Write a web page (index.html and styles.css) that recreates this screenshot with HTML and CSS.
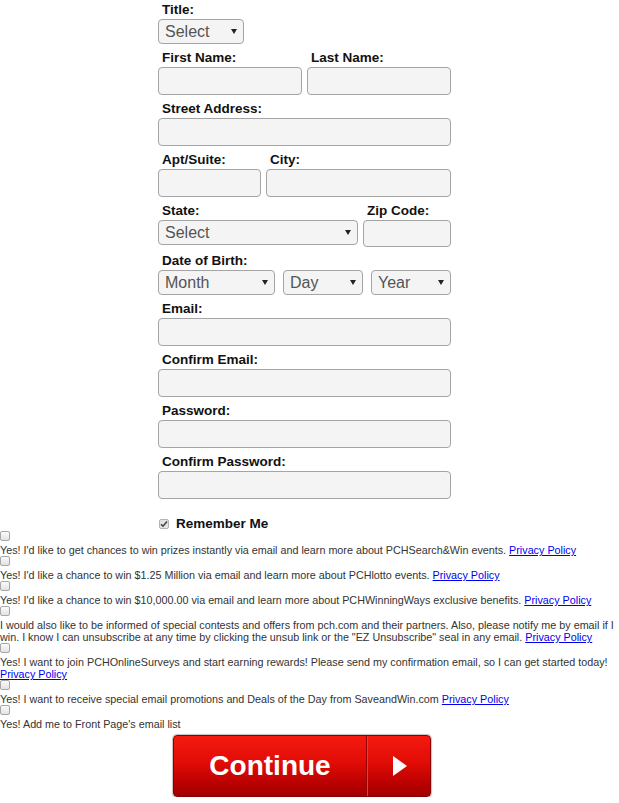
FILE: index.html
```html
<!DOCTYPE html>
<html lang="en">
<head>
<meta charset="utf-8">
<title>Registration</title>
<link rel="stylesheet" href="styles.css">
</head>
<body>
<form class="reg">
  <div class="group">
    <label class="lbl">Title:</label>
    <div class="sel w-title"><select><option>Select</option></select></div>
  </div>
  <div class="row">
    <div class="group w-half"><label class="lbl">First Name:</label><input class="txt" type="text"></div>
    <div class="group w-half"><label class="lbl">Last Name:</label><input class="txt" type="text"></div>
  </div>
  <div class="group"><label class="lbl">Street Address:</label><input class="txt" type="text"></div>
  <div class="row">
    <div class="group w-apt"><label class="lbl">Apt/Suite:</label><input class="txt" type="text"></div>
    <div class="group grow"><label class="lbl">City:</label><input class="txt" type="text"></div>
  </div>
  <div class="row">
    <div class="group w-state"><label class="lbl">State:</label><div class="sel"><select><option>Select</option></select></div></div>
    <div class="group grow"><label class="lbl">Zip Code:</label><input class="txt zip" type="text"></div>
  </div>
  <div class="group">
    <label class="lbl">Date of Birth:</label>
    <div class="row dob">
      <div class="sel w-month"><select><option>Month</option></select></div>
      <div class="sel w-day"><select><option>Day</option></select></div>
      <div class="sel grow"><select><option>Year</option></select></div>
    </div>
  </div>
  <div class="group"><label class="lbl">Email:</label><input class="txt" type="text"></div>
  <div class="group"><label class="lbl">Confirm Email:</label><input class="txt" type="text"></div>
  <div class="group"><label class="lbl">Password:</label><input class="txt" type="password"></div>
  <div class="group"><label class="lbl">Confirm Password:</label><input class="txt" type="password"></div>
  <label class="remember"><input type="checkbox" class="chk-on" checked><span>Remember Me</span></label>
</form>

<div class="opts">
  <label class="opt"><input type="checkbox">Yes! I'd like to get chances to win prizes instantly via email and learn more about PCHSearch&amp;Win events. <a href="#">Privacy Policy</a></label>
  <label class="opt"><input type="checkbox">Yes! I'd like a chance to win $1.25 Million via email and learn more about PCHlotto events. <a href="#">Privacy Policy</a></label>
  <label class="opt"><input type="checkbox">Yes! I'd like a chance to win $10,000.00 via email and learn more about PCHWinningWays exclusive benefits. <a href="#">Privacy Policy</a></label>
  <label class="opt"><input type="checkbox">I would also like to be informed of special contests and offers from pch.com and their partners. Also, please notify me by email if I win. I know I can unsubscribe at any time by clicking the unsub link or the "EZ Unsubscribe" seal in any email. <a href="#">Privacy Policy</a></label>
  <label class="opt"><input type="checkbox">Yes! I want to join PCHOnlineSurveys and start earning rewards! Please send my confirmation email, so I can get started today! <a href="#">Privacy Policy</a></label>
  <label class="opt"><input type="checkbox">Yes! I want to receive special email promotions and Deals of the Day from SaveandWin.com <a href="#">Privacy Policy</a></label>
  <label class="opt"><input type="checkbox">Yes! Add me to Front Page's email list</label>
</div>

<div class="actions">
  <button type="button" class="continue">
    <span class="c-text">Continue</span>
    <span class="c-arrow"><span class="tri"></span></span>
  </button>
</div>
</body>
</html>
```
FILE: styles.css
```css
* { box-sizing: border-box; }

body {
  margin: 0;
  background: #fff;
  color: #111;
  font-family: "Liberation Sans", Arial, sans-serif;
}

.reg {
  width: 303px;
  margin: 0 auto;
  padding: 2px 10px 0 0;
}

.group { margin-bottom: 6px; }

.row { display: flex; gap: 5px; }
.row.dob { gap: 8px; }

.w-half { width: 144px; }
.w-apt { width: 103px; }
.w-state { width: 200px; }
.grow { flex: 1; }

.lbl {
  display: block;
  font-weight: bold;
  font-size: 13.5px;
  line-height: 16px;
  padding-left: 4px;
  margin-bottom: 1px;
  color: #111;
}

.txt {
  display: block;
  width: 100%;
  height: 28px;
  border: 1px solid #a4a4a4;
  border-radius: 4px;
  background: #f4f4f4;
  font: 14px "Liberation Sans", Arial, sans-serif;
  padding: 0 6px;
}
.txt.zip { height: 27px; }

.sel { position: relative; height: 25px; }
.w-title { width: 86px; }
.w-month { width: 117px; }
.w-day { width: 80px; }

.sel select {
  appearance: none;
  -webkit-appearance: none;
  display: block;
  width: 100%;
  height: 25px;
  border: 1px solid #a4a4a4;
  border-radius: 4px;
  background: #f4f4f4;
  font: 16px "Liberation Sans", Arial, sans-serif;
  color: #555;
  padding: 0 0 0 6px;
  margin: 0;
}

.sel::after {
  content: "";
  position: absolute;
  right: 7px;
  top: 10px;
  border-left: 3.5px solid transparent;
  border-right: 3.5px solid transparent;
  border-top: 5px solid #222;
  pointer-events: none;
}

.remember {
  display: flex;
  align-items: center;
  gap: 7px;
  margin-top: 18px;
  padding-left: 1px;
  height: 14px;
  font-weight: bold;
  font-size: 13.5px;
  line-height: 14px;
  color: #111;
}

.chk-on {
  appearance: none;
  -webkit-appearance: none;
  width: 10px;
  height: 10px;
  margin: 0;
  border: 1px solid #b5b5b5;
  border-radius: 2px;
  background: #e4e4e4 url("data:image/svg+xml;utf8,<svg xmlns='http://www.w3.org/2000/svg' viewBox='0 0 10 10'><path d='M2 5.2 L4 7.2 L8 2.6' fill='none' stroke='%23444' stroke-width='1.6'/></svg>") center / 10px 10px no-repeat;
}

.opts {
  font-size: 10.78px;
  line-height: 12px;
  color: #333;
}

.opt { display: block; }

.opt input {
  appearance: none;
  -webkit-appearance: none;
  display: block;
  width: 10px;
  height: 10px;
  margin: 0 0 3px 0;
  border: 1px solid #a8a8a8;
  border-radius: 2px;
  background: linear-gradient(#fbfbfb, #e2e2e2);
}

.opts a { color: #0000ee; text-decoration: underline; }

.actions {
  width: 303px;
  margin: 5px auto 0;
  padding-left: 15px;
}

.continue {
  display: flex;
  width: 258px;
  height: 62px;
  padding: 0;
  border: 1px solid #8a0000;
  border-radius: 4px;
  background: linear-gradient(#f41a0f 0%, #e00c06 45%, #b80000 80%, #a30000 100%);
  box-shadow: 0 0 1px 1px rgba(120, 120, 120, 0.45);
  cursor: pointer;
  overflow: hidden;
}

.c-text {
  width: 193px;
  height: 100%;
  display: flex;
  align-items: center;
  justify-content: center;
  color: #fff;
  font: bold 28px "Liberation Sans", Arial, sans-serif;
  border-right: 1px solid #9a0000;
}

.c-arrow {
  flex: 1;
  height: 100%;
  display: flex;
  align-items: center;
  justify-content: center;
  border-left: 1px solid #f43a30;
}

.tri {
  width: 0;
  height: 0;
  border-left: 14px solid #fff;
  border-top: 10px solid transparent;
  border-bottom: 10px solid transparent;
  margin-left: 1px;
}
```
